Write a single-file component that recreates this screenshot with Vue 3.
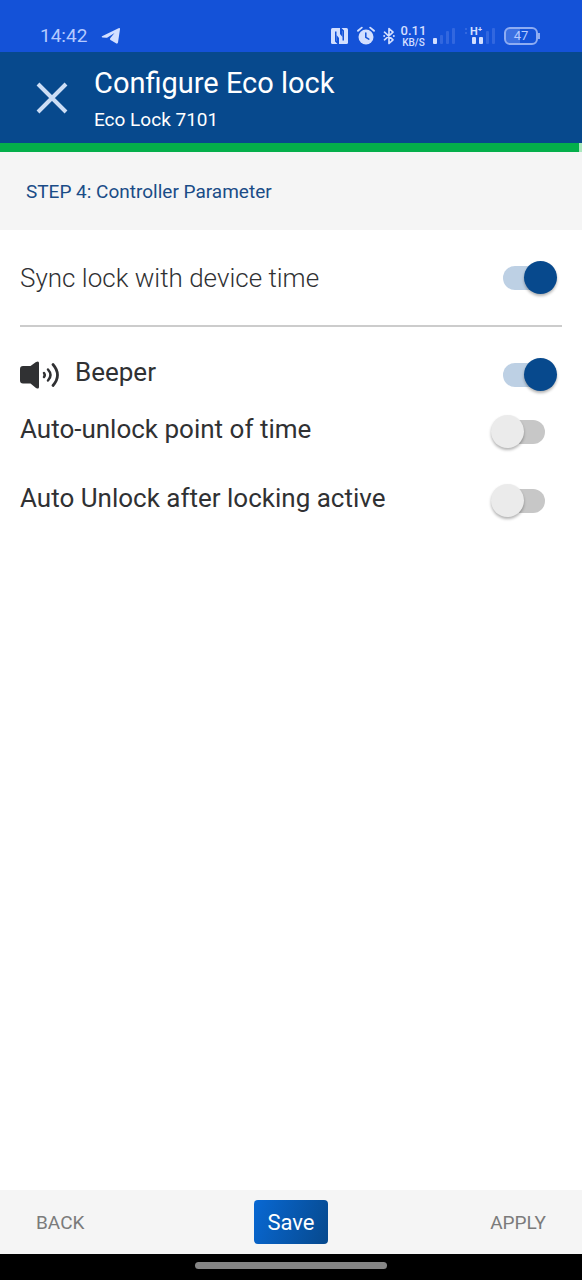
<script setup>
import { reactive } from 'vue'

const progress = 99.5

const settings = reactive({
  sync: true,
  beeper: true,
  pointOfTime: false,
  afterLocking: false
})
</script>

<template>
  <div class="screen">
    <div class="status">
      <span class="clock">14:42</span>
      <svg class="plane" width="20" height="18" viewBox="0 0 20 18" aria-hidden="true">
        <path d="M1 9.200 17.500 1.200q1.700-.7 1.500 1L17 15.500q-.5 1.800-2 .8L9.500 13q-1-.8-.3-1.800L13.500 6 6.500 10.500q-.7.4-1.500.3L1.500 10.600q-1.500-.4-.5-1.400z" fill="currentColor" />
      </svg>
      <div class="indicators">
        <svg width="18" height="18" viewBox="0 0 18 18" aria-hidden="true">
          <rect x="0" y="1" width="17" height="16" rx="1.500" fill="currentColor" />
          <path d="M4 4.500h1.500v9.500H8V17H6.500L4 14.500zM13 13.500h-1.500V4H9V1h1.500L13 3.500z" fill="#1452d8" />
          <path d="M5.500 8 8 11v3H5.500zM11.500 10 9 7V4h2.500z" fill="#1452d8" />
        </svg>
        <svg width="18" height="19" viewBox="0 0 18 19" aria-hidden="true">
          <circle cx="9" cy="11" r="7.500" fill="currentColor" />
          <path d="M1 4.800 4.800 1.600M17 4.800l-3.800-3.200" stroke="currentColor" stroke-width="1.800" stroke-linecap="round" />
          <path d="M8.800 7v4.300l3 1.800" fill="none" stroke="#1452d8" stroke-width="1.500" stroke-linecap="round" />
        </svg>
        <svg width="12" height="18" viewBox="0 0 12 18" aria-hidden="true">
          <path d="M1.500 5.200 10 12.800 6 16.500v-15L10 5.200 1.500 12.800" fill="none" stroke="currentColor" stroke-width="1.700" stroke-linejoin="round" stroke-linecap="round" />
          <circle cx="1.200" cy="9" r="1" fill="currentColor" />
          <circle cx="10.800" cy="9" r="1" fill="currentColor" />
        </svg>
        <span class="speed"><b>0.11</b><small>KB/S</small></span>
        <svg width="24" height="18" viewBox="0 0 24 18" aria-hidden="true">
          <rect x="1" y="11" width="4" height="6" rx="1" fill="currentColor" />
          <g fill="#3267df">
            <rect x="8" y="8" width="3" height="9" rx="1" />
            <rect x="14" y="4" width="3" height="13" rx="1" />
            <rect x="20" y="1" width="3" height="16" rx="1" />
          </g>
        </svg>
        <svg width="32" height="20" viewBox="0 0 32 20" aria-hidden="true">
          <text x="6" y="9" font-family="Roboto, sans-serif" font-size="11" font-weight="700" fill="currentColor">H⁺</text>
          <rect x="8" y="11" width="4" height="7" rx="1" fill="currentColor" />
          <rect x="15" y="11" width="4" height="7" rx="1" fill="currentColor" />
          <g fill="#3267df">
            <rect x="1" y="2" width="2" height="2" />
            <rect x="1" y="6" width="2" height="2" />
            <rect x="22" y="5" width="3" height="13" rx="1" />
            <rect x="28" y="2" width="3" height="16" rx="1" />
          </g>
        </svg>
        <span class="battery"><span class="cell">47</span></span>
      </div>
    </div>

    <header class="header">
      <button class="close" type="button" aria-label="Close">
        <svg width="32" height="32" viewBox="0 0 32 32" aria-hidden="true">
          <path d="M2 2 30 30M30 2 2 30" stroke="currentColor" stroke-width="4" />
        </svg>
      </button>
      <div class="titles">
        <h1>Configure Eco lock</h1>
        <p>Eco Lock 7101</p>
      </div>
    </header>

    <div class="progress"><div class="bar" :style="{ width: progress + '%' }"></div></div>

    <h2 class="step">STEP 4: Controller Parameter</h2>

    <main class="content">
      <div class="row sync">
        <label for="sync">Sync lock with device time</label>
        <input id="sync" v-model="settings.sync" class="switch" type="checkbox" role="switch">
      </div>
      <div class="row first">
        <label for="beeper" class="with-icon">
          <svg width="40" height="28" viewBox="0 0 40 28" aria-hidden="true">
            <path d="M3 5h7.500l5.500-4q3-1.500 3 1v24q0 2.500-3 1l-5.500-4.500H3q-3 0-3-3V8q0-3 3-3z" fill="currentColor" />
            <path d="M24 12q1.500 2 0 4" fill="none" stroke="currentColor" stroke-width="2.500" stroke-linecap="round" />
            <path d="M28 8.500q5 5.500 0 11" fill="none" stroke="currentColor" stroke-width="2.500" stroke-linecap="round" />
            <path d="M33 3.500q9 10.500 0 21" fill="none" stroke="currentColor" stroke-width="2.700" stroke-linecap="round" />
          </svg>
          <span>Beeper</span>
        </label>
        <input id="beeper" v-model="settings.beeper" class="switch" type="checkbox" role="switch">
      </div>
      <div class="row">
        <label for="point">Auto-unlock point of time</label>
        <input id="point" v-model="settings.pointOfTime" class="switch" type="checkbox" role="switch">
      </div>
      <div class="row last">
        <label for="after">Auto Unlock after locking active</label>
        <input id="after" v-model="settings.afterLocking" class="switch" type="checkbox" role="switch">
      </div>
    </main>

    <footer class="footer">
      <button type="button">BACK</button>
      <button type="button" class="save">Save</button>
      <button type="button" class="apply">APPLY</button>
    </footer>
    <div class="nav"><div class="handle"></div></div>
  </div>
</template>

<style>
body {
  margin: 0;
}
</style>

<style scoped>
.screen {
  display: flex;
  flex-direction: column;
  min-height: 100vh;
  background: #fff;
  color: #303133;
  font-family: Roboto, "Liberation Sans", sans-serif;
}

.status {
  display: flex;
  align-items: center;
  height: 52px;
  box-sizing: border-box;
  padding: 19px 42px 0 40px;
  background: #1452d8;
  color: #d3dfff;
}

.clock {
  font-size: 19px;
  line-height: 24px;
  color: #b5caff;
}

.plane {
  margin-left: 14px;
}

.indicators {
  display: flex;
  align-items: center;
  gap: 8px;
  margin-left: auto;
}

.speed {
  display: flex;
  flex-direction: column;
  align-items: center;
  width: 21px;
}

.speed b {
  font-size: 13px;
  line-height: 13px;
  font-weight: 500;
}

.speed small {
  font-size: 10px;
  line-height: 11px;
  font-weight: 500;
}

.battery {
  display: flex;
  align-items: center;
}

.cell {
  width: 30px;
  border: 2px solid #8eacf2;
  border-radius: 6px;
  background: linear-gradient(90deg, #3c71e2 47%, transparent 47%);
  color: #b5caff;
  font-size: 13px;
  line-height: 14px;
  text-align: center;
}

.battery::after {
  content: "";
  width: 2px;
  height: 6px;
  background: #8eacf2;
}

.header {
  display: flex;
  align-items: center;
  gap: 26px;
  height: 91px;
  padding-left: 36px;
  background: #07498d;
  color: #fff;
}

.titles {
  padding-top: 6px;
}

button {
  padding: 0;
  border: 0;
  background: none;
  font: inherit;
  cursor: pointer;
}

.close {
  display: flex;
  color: #ccddf5;
}

h1 {
  margin: 0;
  font-size: 29px;
  line-height: 38px;
  font-weight: 400;
}

p {
  margin: 0;
  font-size: 19px;
  line-height: 36px;
}

.progress {
  background: #a9e8bd;
}

.bar {
  height: 9px;
  background: #04af4b;
}

.step {
  margin: 0;
  padding: 2px 26px 0;
  background: #f5f5f5;
  color: #1a4c87;
  font-size: 19px;
  line-height: 76px;
  font-weight: 400;
}

.content {
  flex: 1;
  padding: 0 20px;
}

.row {
  display: flex;
  align-items: center;
  justify-content: space-between;
  height: 57px;
}

label {
  padding-bottom: 6px;
  font-size: 26px;
  line-height: 32px;
}

.sync {
  height: 95px;
  border-bottom: 2px solid #ccc;
}

.sync label {
  padding-bottom: 0;
  font-weight: 300;
}

.first {
  margin-top: 19px;
}

.last {
  margin-top: 12px;
}

.with-icon {
  display: flex;
  gap: 15px;
  align-items: center;
  padding-bottom: 0;
}

.with-icon span {
  padding-bottom: 6px;
}

.switch {
  appearance: none;
  display: flex;
  align-items: center;
  width: 42px;
  height: 24px;
  margin: 0 17px 0 0;
  border-radius: 12px;
  background: #c7c7c7;
  cursor: pointer;
}

.switch::before {
  content: "";
  flex: none;
  width: 33px;
  height: 33px;
  margin-left: -12px;
  border-radius: 50%;
  background: #ebebeb;
  box-shadow: 0 2px 3px rgba(0, 0, 0, 0.3);
}

.switch:checked {
  background: #bdd0e4;
}

.switch:checked::before {
  margin-left: 21px;
  background: #07498d;
}

.footer {
  display: grid;
  grid-template-columns: 1fr auto 1fr;
  align-items: center;
  height: 64px;
  padding: 0 36px;
  background: #f5f5f5;
  color: #7b7b7b;
  font-size: 19px;
}

.footer button {
  justify-self: start;
  color: inherit;
}

.footer .apply {
  justify-self: end;
}

.footer .save {
  height: 44px;
  padding: 0 13px;
  border-radius: 4px;
  background: linear-gradient(110deg, #0868d3, #07498d);
  color: #fff;
  font-size: 22px;
}

.nav {
  display: flex;
  justify-content: center;
  height: 26px;
  background: #000;
}

.handle {
  width: 33%;
  height: 7px;
  margin-top: 8px;
  border-radius: 4px;
  background: #858585;
}
</style>
